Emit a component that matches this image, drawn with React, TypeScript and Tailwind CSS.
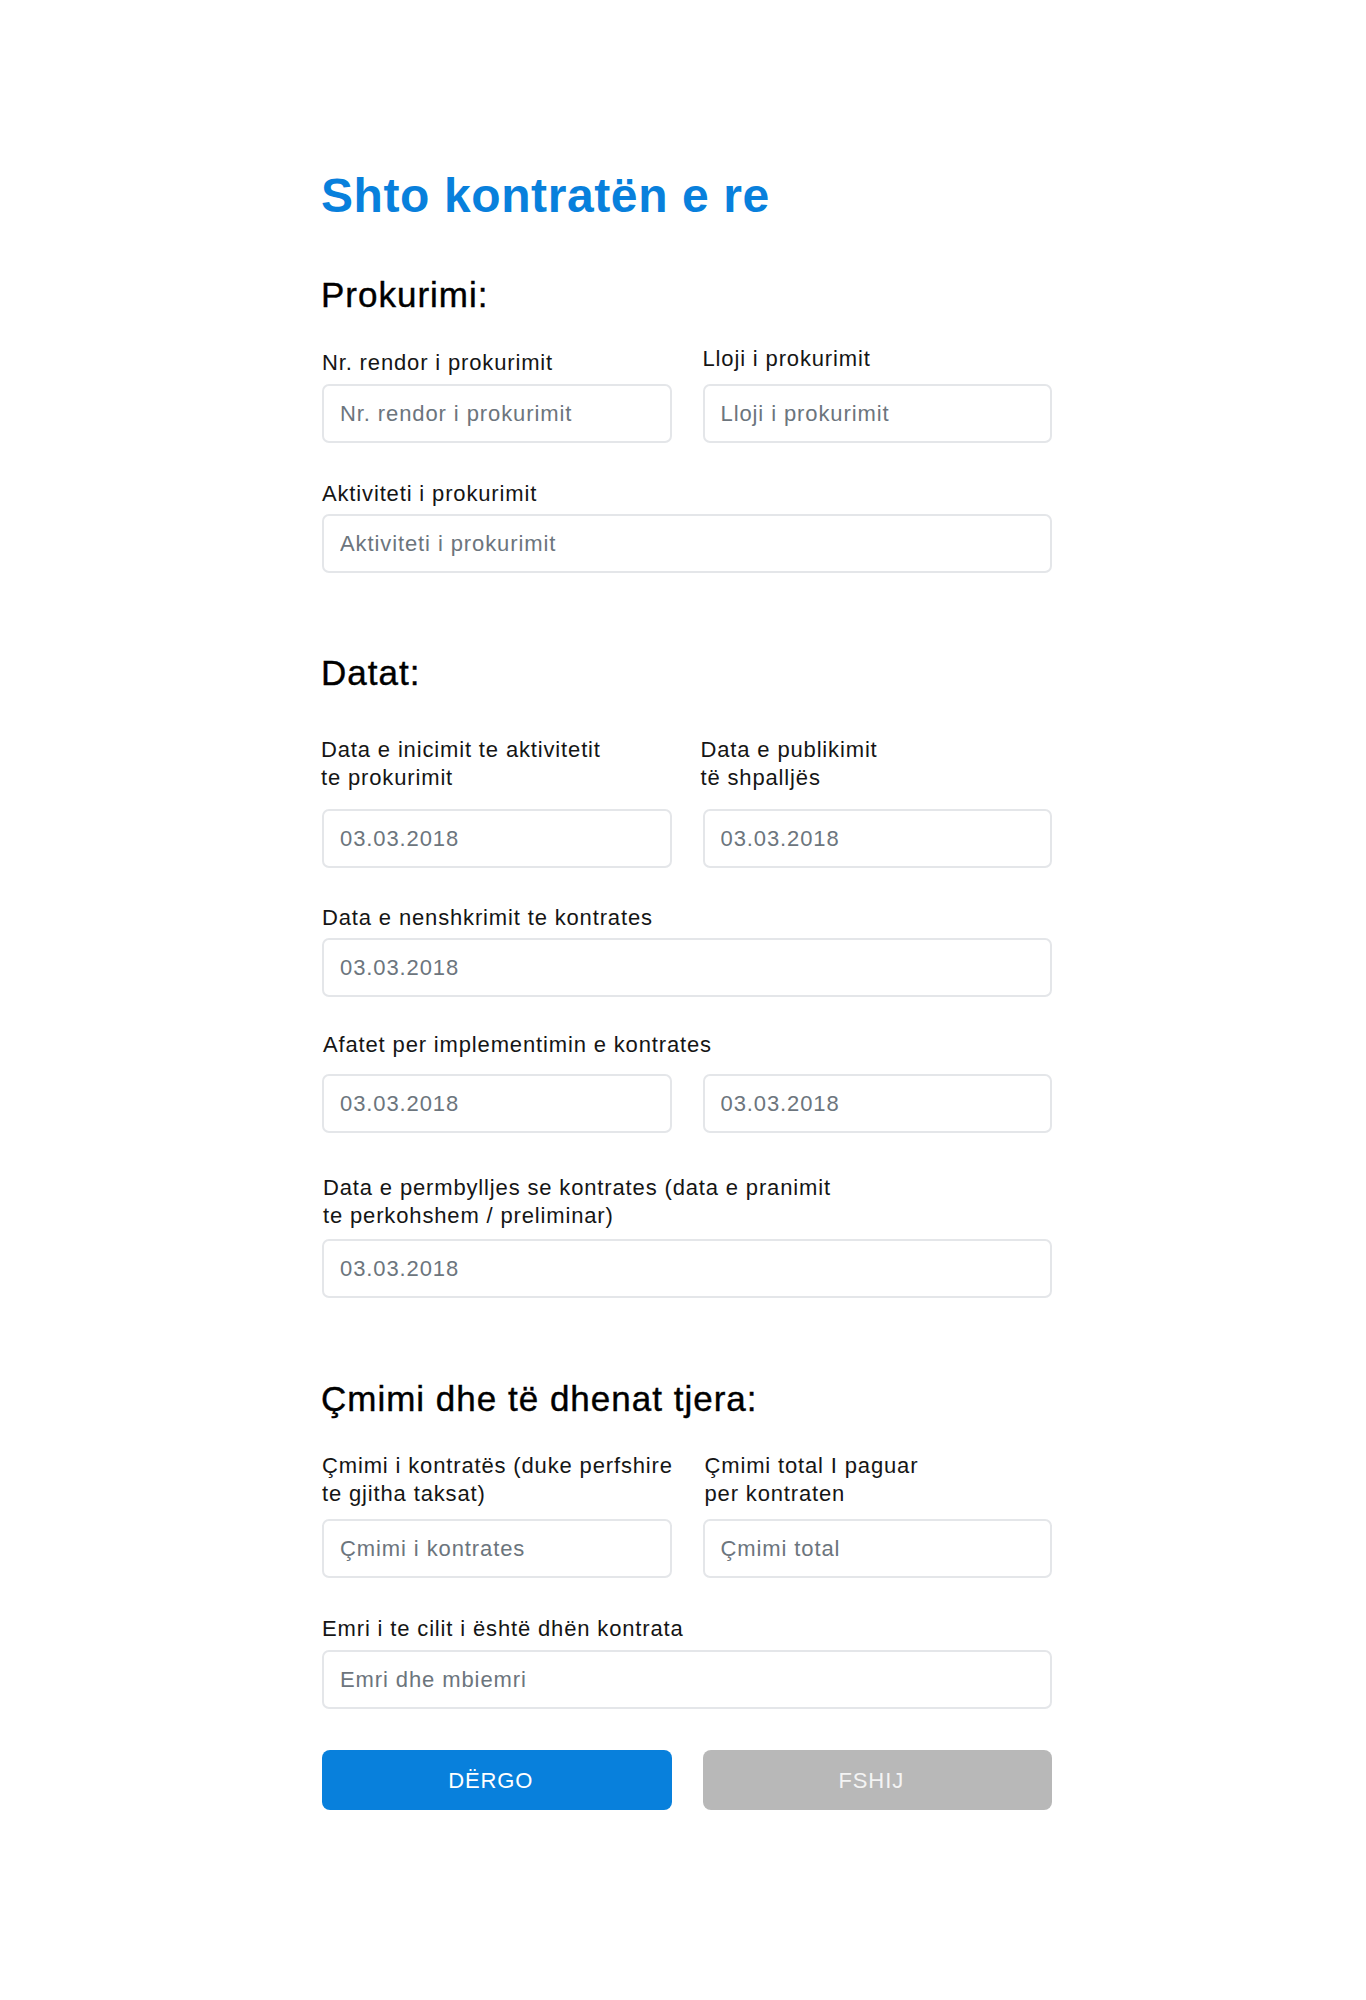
import React from 'react';

const labelCls =
  "block whitespace-nowrap text-[22px] leading-[28px] tracking-[0.85px] text-[#151515]";
const inputCls =
  "block w-full h-[59px] rounded-[7px] border-2 border-[#e4e6e9] bg-white px-4 text-[22px] tracking-[0.9px] text-[#333] placeholder:text-[#6c757d] outline-none";
const headingCls =
  "text-[35px] leading-[35px] tracking-[1px] text-black [-webkit-text-stroke:0.4px_black]";

const Field = ({
  label,
  placeholder,
  gap,
  className = '',
}: {
  label: React.ReactNode;
  placeholder: string;
  gap: string;
  className?: string;
}) => (
  <div className={className}>
    <label className={`${labelCls} ${gap}`}>{label}</label>
    <input className={inputCls} placeholder={placeholder} />
  </div>
);

const App = () => {
  return (
    <div className="min-h-[2000px] bg-white font-['Liberation_Sans',Arial,sans-serif]">
      <form
        className="ml-[322px] w-[730px] pt-[172px]"
        onSubmit={(e) => e.preventDefault()}
      >
        <h1 className="-ml-[1px] text-[48px] leading-[48px] font-bold tracking-[0.6px] text-[#0880dc]">
          Shto kontratën e re
        </h1>

        {/* Prokurimi */}
        <h2 className={`mt-[57px] -ml-[1px] ${headingCls}`}>Prokurimi:</h2>
        <div className="mt-[33px] grid grid-cols-2 items-end gap-x-[31px]">
          <Field
            label="Nr. rendor i prokurimit"
            placeholder="Nr. rendor i prokurimit"
            gap="mb-[7px]"
          />
          <Field
            label="Lloji i prokurimit"
            placeholder="Lloji i prokurimit"
            gap="mb-[11px]"
          />
        </div>
        <Field
          className="mt-[37px]"
          label="Aktiviteti i prokurimit"
          placeholder="Aktiviteti i prokurimit"
          gap="mb-[6px]"
        />

        {/* Datat */}
        <h2 className={`mt-[82px] -ml-[1px] ${headingCls}`}>Datat:</h2>
        <div className="mt-[46px] grid grid-cols-2 items-end gap-x-[31px]">
          <Field
            label={
              <>
                Data e inicimit te aktivitetit
                <br />
                te prokurimit
              </>
            }
            placeholder="03.03.2018"
            gap="mb-[17px] -ml-[1px]"
          />
          <Field
            label={
              <>
                Data e publikimit
                <br />
                të shpalljës
              </>
            }
            placeholder="03.03.2018"
            gap="mb-[17px] -ml-[2px]"
          />
        </div>
        <Field
          className="mt-[36px]"
          label="Data e nenshkrimit te kontrates"
          placeholder="03.03.2018"
          gap="mb-[6px]"
        />

        <div className="mt-[34px]">
          <label className={`${labelCls} mb-[15px] ml-[1px]`}>
            Afatet per implementimin e kontrates
          </label>
          <div className="grid grid-cols-2 gap-x-[31px]">
            <input className={inputCls} placeholder="03.03.2018" />
            <input className={inputCls} placeholder="03.03.2018" />
          </div>
        </div>

        <Field
          className="mt-[41px]"
          label={
            <>
              Data e permbylljes se kontrates (data e pranimit
              <br />
              te perkohshem / preliminar)
            </>
          }
          placeholder="03.03.2018"
          gap="mb-[9px] ml-[1px]"
        />

        {/* Cmimi */}
        <h2 className={`mt-[83px] -ml-[1px] ${headingCls}`}>
          Çmimi dhe të dhenat tjera:
        </h2>
        <div className="mt-[36px] grid grid-cols-2 items-end gap-x-[31px]">
          <Field
            label={
              <>
                Çmimi i kontratës (duke perfshire
                <br />
                te gjitha taksat)
              </>
            }
            placeholder="Çmimi i kontrates"
            gap="mb-[11px]"
          />
          <Field
            label={
              <>
                Çmimi total I paguar
                <br />
                per kontraten
              </>
            }
            placeholder="Çmimi total"
            gap="mb-[11px] ml-[2px]"
          />
        </div>
        <Field
          className="mt-[37px]"
          label="Emri i te cilit i është dhën kontrata"
          placeholder="Emri dhe mbiemri"
          gap="mb-[7px]"
        />

        <div className="mt-[41px] grid grid-cols-2 gap-x-[31px]">
          <button
            type="submit"
            className="h-[60px] rounded-[8px] bg-[#0880dc] pr-[12px] text-[22px] tracking-[0.9px] text-white"
          >
            DËRGO
          </button>
          <button
            type="reset"
            className="h-[60px] rounded-[8px] bg-[#b8b8b8] pr-[12px] text-[22px] tracking-[0.9px] text-[#f4f4f4]"
          >
            FSHIJ
          </button>
        </div>
      </form>
    </div>
  );
};

export default App;
